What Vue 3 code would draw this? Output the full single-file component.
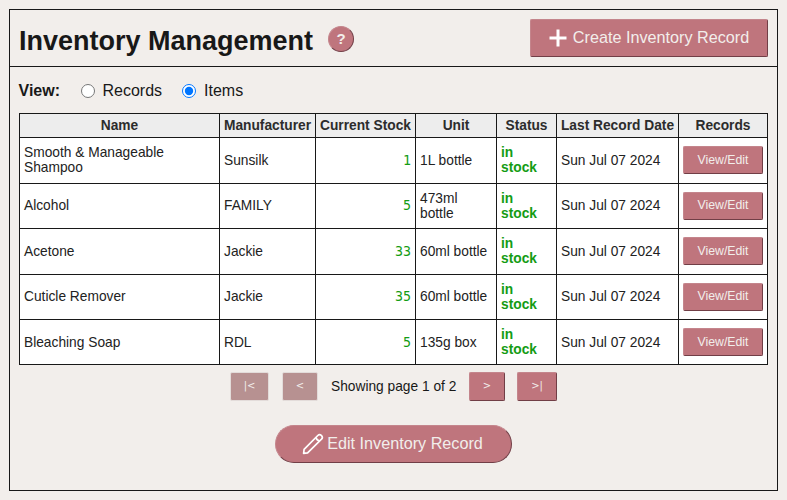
<script setup>
import { ref } from 'vue'

const view = ref('items')
const columns = ['Name', 'Manufacturer', 'Current Stock', 'Unit', 'Status', 'Last Record Date', 'Records']
const items = [
  { name: 'Smooth & Manageable Shampoo', maker: 'Sunsilk', stock: 1, unit: '1L bottle' },
  { name: 'Alcohol', maker: 'FAMILY', stock: 5, unit: '473ml bottle' },
  { name: 'Acetone', maker: 'Jackie', stock: 33, unit: '60ml bottle' },
  { name: 'Cuticle Remover', maker: 'Jackie', stock: 35, unit: '60ml bottle' },
  { name: 'Bleaching Soap', maker: 'RDL', stock: 5, unit: '135g box' },
]
</script>

<template>
  <main class="panel">
    <header class="head">
      <h1>Inventory Management</h1>
      <button class="btn help">?</button>
      <button class="btn create">
        <svg class="plus" width="18" height="18" viewBox="0 0 18 18">
          <path d="M9 0.5V17.5M0.5 9H17.5" stroke="#fff" stroke-width="3" fill="none" />
        </svg>
        <span>Create Inventory Record</span>
      </button>
    </header>

    <div class="view">
      <b>View:</b>
      <label><input v-model="view" type="radio" value="records" /><span>Records</span></label>
      <label><input v-model="view" type="radio" value="items" /><span>Items</span></label>
    </div>

    <table>
      <thead>
        <tr><th v-for="c in columns" :key="c">{{ c }}</th></tr>
      </thead>
      <tbody>
        <tr v-for="item in items" :key="item.name">
          <td>{{ item.name }}</td>
          <td>{{ item.maker }}</td>
          <td class="stock">{{ item.stock }}</td>
          <td>{{ item.unit }}</td>
          <td class="status">in stock</td>
          <td>Sun Jul 07 2024</td>
          <td class="action"><button class="btn small">View/Edit</button></td>
        </tr>
      </tbody>
    </table>

    <nav class="pager">
      <button class="btn page first" disabled>|&lt;</button>
      <button class="btn page prev" disabled>&lt;</button>
      <span class="info">Showing page 1 of 2</span>
      <button class="btn page next">&gt;</button>
      <button class="btn page last">&gt;|</button>
    </nav>

    <button class="btn edit">
      <svg width="22" height="22" viewBox="0 0 22 22" fill="none" stroke="#fff" stroke-width="1.7" stroke-linejoin="round">
        <path d="M1.6 20.4L2.1 16.4L15.8 2.5Q17.6 0.8 19.5 2.6Q21.2 4.4 19.5 6.2L5.6 19.9Z" />
        <path d="M14 4.3Q14.6 7.4 17.7 8" />
      </svg>
      <span>Edit Inventory Record</span>
    </button>
  </main>
</template>

<style>
body {
  margin: 0;
  background: #f2eeeb;
}
</style>

<style scoped>
.panel {
  box-sizing: border-box;
  width: 769px;
  height: 482px;
  margin: 9px 0 9px 9px;
  border: 1px solid #181818;
  color: #181818;
  font: 16px "Liberation Sans", Arial, sans-serif;
  display: flow-root;
}
.head {
  box-sizing: border-box;
  height: 57px;
  padding: 0 9px;
  border-bottom: 1px solid #181818;
  display: flex;
  align-items: center;
}
h1 {
  margin: 6px 0 0;
  width: 294px;
  font-size: 27px;
  line-height: 32px;
  white-space: nowrap;
}
.btn {
  box-sizing: border-box;
  display: flex;
  align-items: center;
  justify-content: center;
  padding: 0 0 1px;
  border: 1px solid;
  border-color: #c4858c #713e46 #713e46 #c4858c;
  border-radius: 2px;
  background: #bf757d;
  color: #f2eeeb;
  font-family: inherit;
  font-size: 16.2px;
  white-space: nowrap;
}
.help {
  width: 26px;
  height: 26px;
  margin: 2px 0 0 15px;
  border-radius: 50%;
  font-size: 15px;
  font-weight: bold;
  padding-bottom: 2px;
}
.create {
  width: 238px;
  height: 38px;
  margin-left: auto;
  gap: 6px;
  padding-bottom: 2px;
}
.plus {
  margin-top: 2px;
}
.view {
  height: 46px;
  padding: 1px 0 0 8.5px;
  box-sizing: border-box;
  display: flex;
  align-items: center;
}
.view label {
  display: flex;
  align-items: center;
}
.view b + label {
  margin-left: 20.5px;
}
.view label + label {
  margin-left: 20px;
}
.view input {
  width: 14px;
  height: 14px;
  margin: 0 8px 0 0;
}
table {
  display: block;
  box-sizing: border-box;
  width: 749px;
  margin-left: 9px;
  border: solid #181818;
  border-width: 1px 0 0 1px;
  font-size: 13.75px;
  line-height: 15px;
}
thead,
tbody {
  display: block;
}
tr {
  display: grid;
  grid-template-columns: 200px 96px 100px 81px 60px 122px 89px;
  height: 45px;
  background: #fff;
}
tbody tr:nth-child(1),
tbody tr:nth-child(3) {
  height: 46px;
}
tbody tr:nth-child(1) td,
tbody tr:nth-child(3) td {
  padding-bottom: 1px;
}
tbody tr:nth-child(even) td {
  padding-bottom: 0.5px;
}
thead tr {
  height: 24px;
  background: #ededed;
}
th,
td {
  display: flex;
  align-items: center;
  padding: 0 4px;
  border: solid #181818;
  border-width: 0 1px 1px 0;
  color: #222;
}
th {
  justify-content: center;
  padding: 0;
  white-space: nowrap;
  color: #2c2c2c;
}
.stock {
  justify-content: flex-end;
  color: #149c14;
  font-family: "DejaVu Sans Mono", monospace;
  font-size: 13.3px;
}
.status {
  padding-right: 20px;
  color: #149c14;
  font-weight: bold;
}
.small {
  width: 80px;
  height: 28px;
  font-size: 12.3px;
}
.pager {
  height: 29px;
  margin: 7px 0 0 220px;
  display: flex;
  align-items: center;
}
.page {
  height: 29px;
  font-family: "DejaVu Sans", sans-serif;
  font-size: 10px;
  padding-bottom: 2px;
}
.page:disabled {
  background: #b79191;
  border-color: #e3dcda;
}
.first {
  width: 39px;
}
.prev {
  width: 36px;
  margin-left: 13px;
}
.info {
  margin: 0 13px;
  width: 125px;
  font-size: 13.75px;
  white-space: nowrap;
}
.next {
  width: 36px;
}
.last {
  width: 40px;
  margin-left: 12px;
}
.edit {
  width: 237px;
  height: 38px;
  margin: 24px 0 0 265px;
  border-radius: 19px;
  gap: 3px;
  padding: 0 2px 1px 0;
}
</style>
